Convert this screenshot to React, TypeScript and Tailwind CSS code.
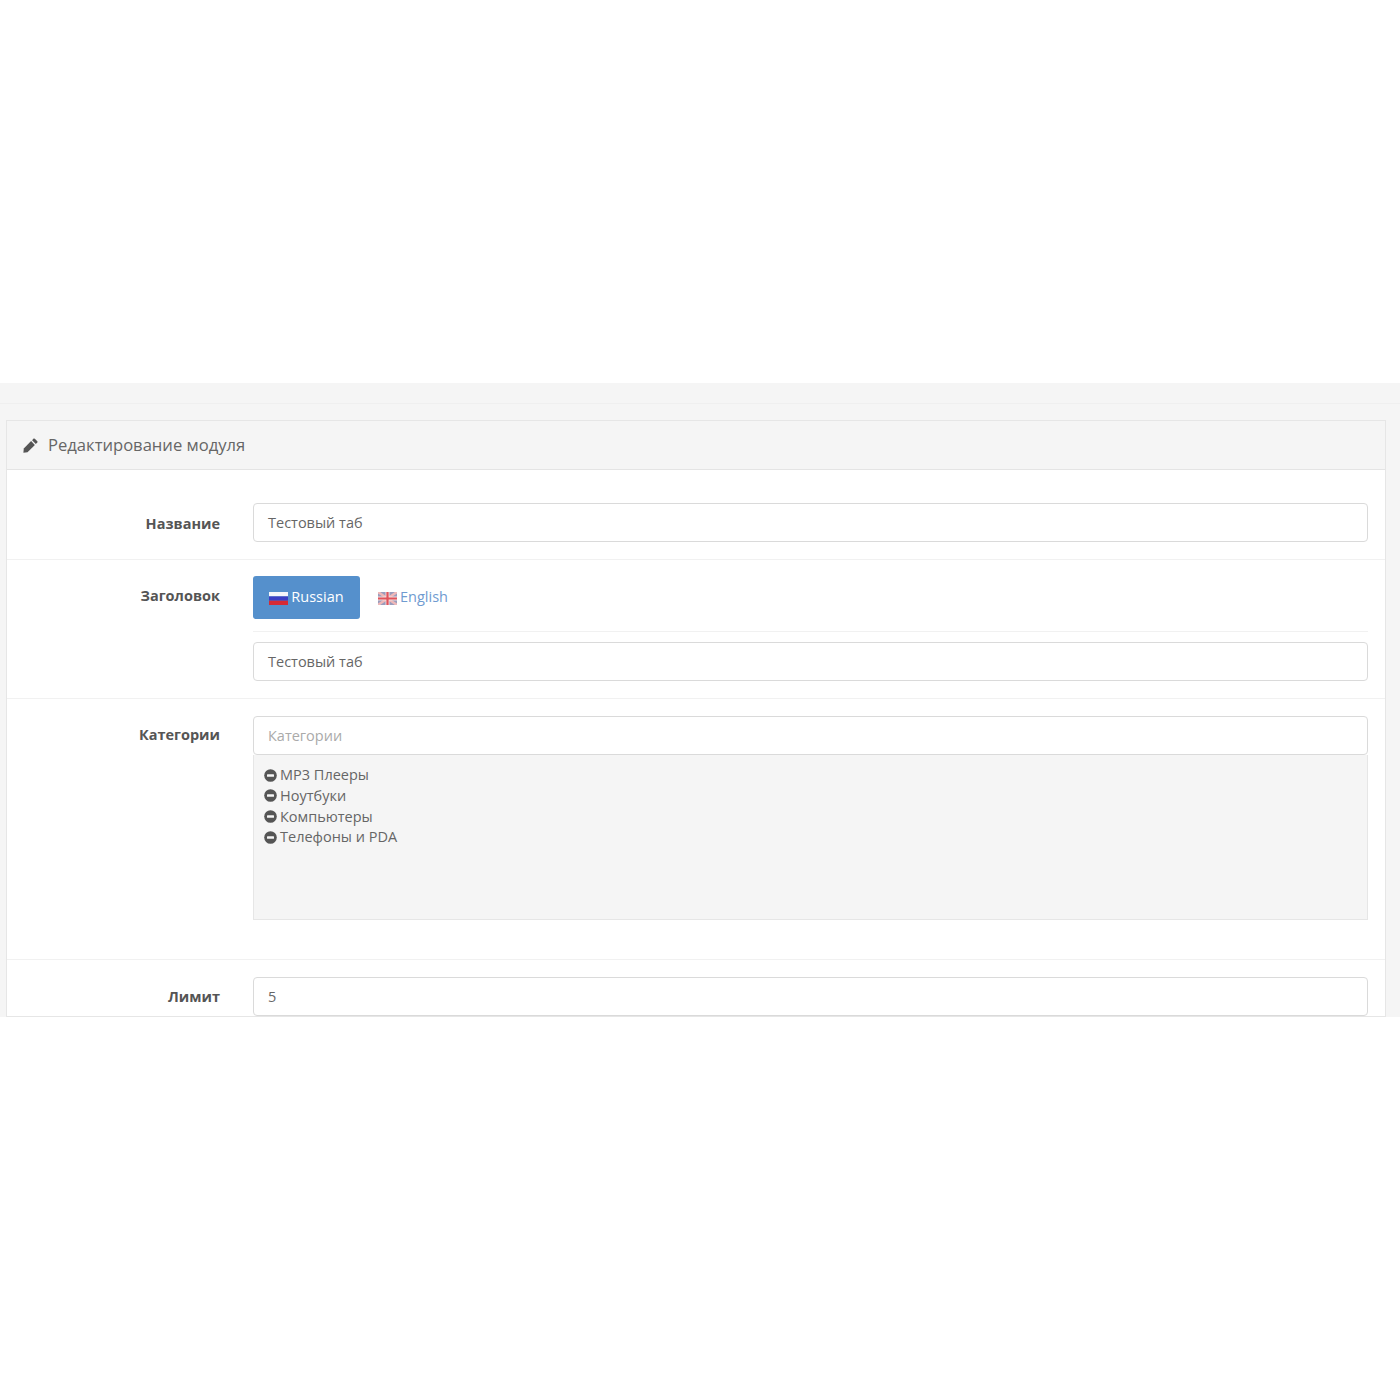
function MinusIcon() {
  return (
    <svg width="13" height="13" viewBox="0 0 13 13" className="shrink-0">
      <circle cx="6.5" cy="6.5" r="6.3" fill="#555555" />
      <rect x="3" y="5.2" width="7" height="2.6" rx="0.5" fill="#f5f5f5" />
    </svg>
  );
}

function Pencil() {
  return (
    <svg width="15" height="15" viewBox="0 0 15 15" className="shrink-0">
      <path d="M10.6 0.6 Q11.2 0.2 11.8 0.7 L14.3 3.2 Q14.8 3.8 14.3 4.4 L12.8 5.9 L9.1 2.2 Z" fill="#555555" />
      <path d="M8.1 3.1 L11.9 6.9 L4.5 14.3 L0.4 14.8 L0.8 10.4 Z" fill="#555555" />
    </svg>
  );
}

function RuFlag() {
  return (
    <svg width="19" height="13" viewBox="0 0 19 13" className="mt-[1px] shrink-0">
      <rect width="19" height="4.4" fill="#f4f6fa" />
      <rect y="4.4" width="19" height="4.3" fill="#3b3fc4" />
      <rect y="8.7" width="19" height="4.3" fill="#d52b35" />
    </svg>
  );
}

function EnFlag() {
  return (
    <svg width="19" height="13" viewBox="0 0 19 13" className="mt-[1px] shrink-0">
      <rect width="19" height="13" fill="#9a9dbd" />
      <path d="M0 0 L19 13 M19 0 L0 13" stroke="#efb8b8" strokeWidth="2.4" />
      <path d="M9.5 0 V13 M0 6.5 H19" stroke="#f4dcdc" strokeWidth="4" />
      <path d="M9.5 0 V13 M0 6.5 H19" stroke="#e0535b" strokeWidth="2.2" />
    </svg>
  );
}

function Field({ value, placeholder }: { value?: string; placeholder?: string }) {
  return (
    <div
      className={`flex h-[39px] items-center rounded-[4px] border border-[#dadada] bg-white px-[14px] text-[14.5px] ${
        placeholder ? "text-[#aaaaaa]" : "text-[#666666]"
      }`}
    >
      {value ?? placeholder}
    </div>
  );
}

function Label({ children }: { children: string }) {
  return (
    <div className="w-[213px] shrink-0 text-right text-[14.5px] font-bold leading-[20px] text-[#555555]">
      {children}
    </div>
  );
}

const categories = [
  { name: "MP3 Плееры", h: "h-[20px]" },
  { name: "Ноутбуки", h: "h-[21px]" },
  { name: "Компьютеры", h: "h-[21px]" },
  { name: "Телефоны и PDA", h: "h-[20px]" },
];

export default function App() {
  return (
    <div className="min-h-[1400px] bg-white font-['Open_Sans',sans-serif]">
      <div className="h-[383px]" />
      <div className="h-[634px] overflow-hidden bg-[#f5f5f5]">
        <div className="h-[21px] border-b border-[#efefef]" />
        <div className="pl-[6px] pr-[14px] pt-[16px]">
          <div className="border border-[#e6e6e6] bg-white">
            <div className="flex h-[49px] items-center gap-[10px] border-b border-[#e4e4e4] bg-[#f5f5f5] pl-[16px] text-[16.6px] text-[#666666]">
              <Pencil />
              <span>Редактирование модуля</span>
            </div>
            <div className="flex h-[90px] gap-[33px] border-b border-[#f1f1f1] pr-[17px] pt-[33px]">
              <div className="pt-[11px]">
                <Label>Название</Label>
              </div>
              <div className="min-w-0 flex-1">
                <Field value="Тестовый таб" />
              </div>
            </div>
            <div className="flex h-[139px] gap-[33px] border-b border-[#f1f1f1] pr-[17px] pt-[16px]">
              <div className="pt-[10px]">
                <Label>Заголовок</Label>
              </div>
              <div className="min-w-0 flex-1">
                <div className="flex h-[56px] items-start gap-[18px] border-b border-[#f1f1f1]">
                  <div className="flex h-[43px] w-[107px] items-center justify-center gap-[3px] rounded-[3px] bg-[#5590cc] text-[14.5px] text-white">
                    <RuFlag />
                    <span className="pb-[2px]">Russian</span>
                  </div>
                  <div className="flex h-[43px] items-center gap-[3px] text-[14.5px] text-[#6f9bd0]">
                    <EnFlag />
                    <span className="pb-[2px]">English</span>
                  </div>
                </div>
                <div className="pt-[10px]">
                  <Field value="Тестовый таб" />
                </div>
              </div>
            </div>
            <div className="flex h-[261px] gap-[33px] border-b border-[#f1f1f1] pr-[17px] pt-[17px]">
              <div className="pt-[9px]">
                <Label>Категории</Label>
              </div>
              <div className="min-w-0 flex-1">
                <Field placeholder="Категории" />
                <div className="h-[165px] border border-t-0 border-[#e6e6e6] bg-[#f5f5f5] pl-[10px] pt-[10px] text-[14.5px] text-[#666666]">
                  {categories.map((c) => (
                    <div key={c.name} className={`flex items-center gap-[3px] ${c.h}`}>
                      <MinusIcon />
                      <span>{c.name}</span>
                    </div>
                  ))}
                </div>
              </div>
            </div>
            <div className="flex gap-[33px] pr-[17px] pt-[17px]">
              <div className="pt-[10px]">
                <Label>Лимит</Label>
              </div>
              <div className="min-w-0 flex-1">
                <Field value="5" />
              </div>
            </div>
          </div>
        </div>
      </div>
    </div>
  );
}
